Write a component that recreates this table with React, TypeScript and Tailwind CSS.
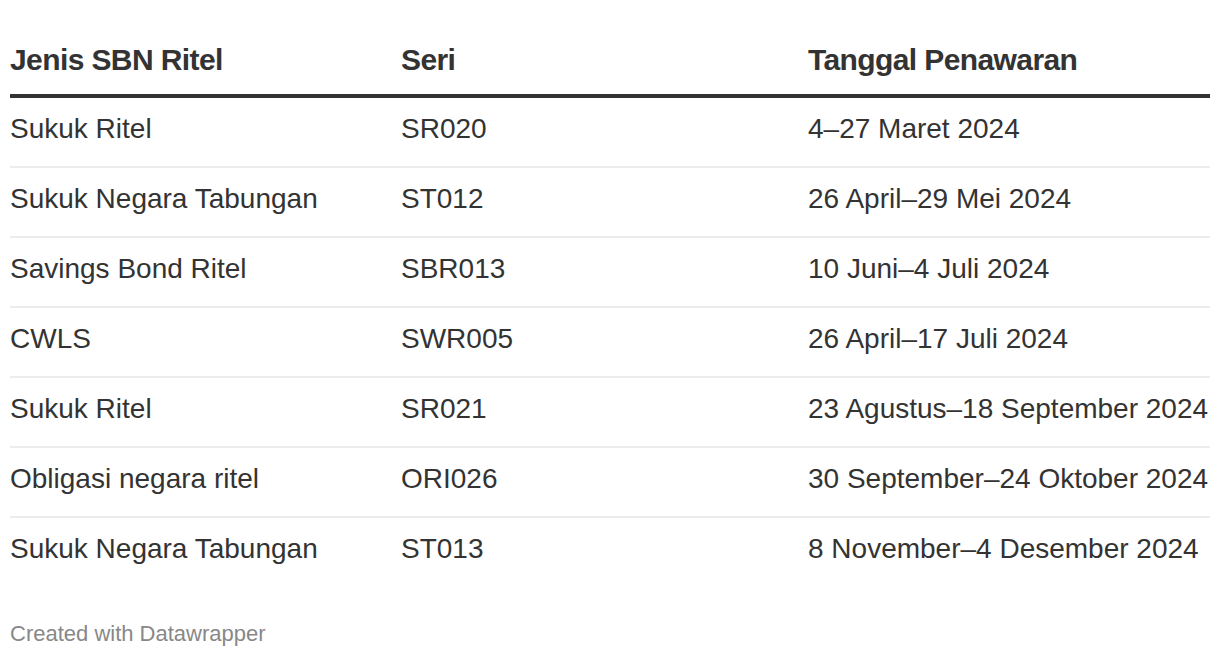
import React from "react";

const rows: [string, string, string][] = [
  ["Sukuk Ritel", "SR020", "4–27 Maret 2024"],
  ["Sukuk Negara Tabungan", "ST012", "26 April–29 Mei 2024"],
  ["Savings Bond Ritel", "SBR013", "10 Juni–4 Juli 2024"],
  ["CWLS", "SWR005", "26 April–17 Juli 2024"],
  ["Sukuk Ritel", "SR021", "23 Agustus–18 September 2024"],
  ["Obligasi negara ritel", "ORI026", "30 September–24 Oktober 2024"],
  ["Sukuk Negara Tabungan", "ST013", "8 November–4 Desember 2024"],
];

export default function App() {
  return (
    <div
      className="w-[1220px] h-[658px] bg-white px-[10px] text-[#333]"
      style={{ fontFamily: '"Liberation Sans", Arial, Helvetica, sans-serif' }}
    >
      <div className="grid grid-cols-[391px_407px_1fr] border-b-4 border-[#333] pt-[43px] pb-[17px] text-[30px] leading-[34px] font-bold tracking-[-0.6px]">
        <div className="whitespace-nowrap">Jenis SBN Ritel</div>
        <div className="whitespace-nowrap">Seri</div>
        <div className="whitespace-nowrap">Tanggal Penawaran</div>
      </div>
      {rows.map((r, i) => (
        <div
          key={i}
          className={
            "grid grid-cols-[391px_407px_1fr] h-[70px] pt-[15px] text-[28px] leading-[32px] " +
            (i < rows.length - 1 ? "border-b-2 border-[#ececec]" : "")
          }
        >
          <div className="whitespace-nowrap">{r[0]}</div>
          <div className="whitespace-nowrap">{r[1]}</div>
          <div className="whitespace-nowrap">{r[2]}</div>
        </div>
      ))}
      <div className="mt-[33px] text-[22px] leading-[26px] text-[#888]">
        Created with Datawrapper
      </div>
    </div>
  );
}
